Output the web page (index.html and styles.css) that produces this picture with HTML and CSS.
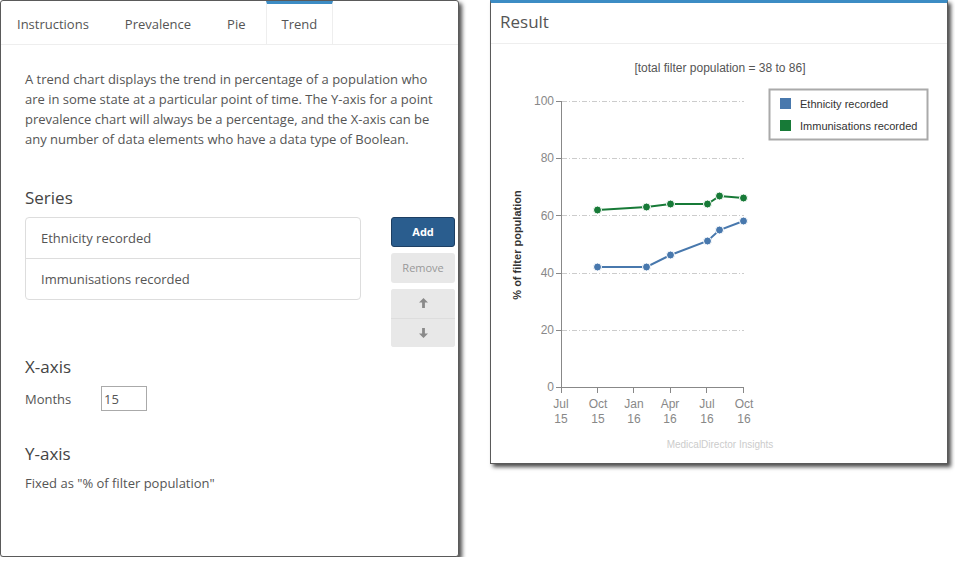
FILE: index.html
```html
<!DOCTYPE html>
<html lang="en">
<head>
    <meta charset="UTF-8">
    <meta name="viewport" content="width=device-width, initial-scale=1.0">
    <title>Trend | Chart Designer</title>
    <link rel="stylesheet" href="styles.css">
</head>
<body>

<div class="workspace">

    <!-- Chart settings -->
    <div class="panel editor">
        <ul class="tabs">
            <li>Instructions</li>
            <li>Prevalence</li>
            <li>Pie</li>
            <li class="active">Trend</li>
        </ul>

        <div class="tab-body">
            <p class="intro">A trend chart displays the trend in percentage of a population who are in some state at a particular point of time. The Y-axis for a point prevalence chart will always be a percentage, and the X-axis can be any number of data elements who have a data type of Boolean.</p>

            <h3 class="series-title">Series</h3>
            <div class="series-row">
                <ul class="series-list">
                    <li>Ethnicity recorded</li>
                    <li>Immunisations recorded</li>
                </ul>
                <div class="series-buttons">
                    <button class="btn btn-primary">Add</button>
                    <button class="btn" disabled>Remove</button>
                    <div class="btn-group">
                        <button class="btn">
                            <svg width="9" height="10" viewBox="0 0 9 10"><path d="M4.5 0 L9 4.6 L5.9 4.6 L5.9 10 L3.1 10 L3.1 4.6 L0 4.6 Z" fill="#8a8a8a"/></svg>
                        </button>
                        <button class="btn">
                            <svg width="9" height="10" viewBox="0 0 9 10"><path d="M4.5 10 L9 5.4 L5.9 5.4 L5.9 0 L3.1 0 L3.1 5.4 L0 5.4 Z" fill="#8a8a8a"/></svg>
                        </button>
                    </div>
                </div>
            </div>

            <h3 class="axis-title">X-axis</h3>
            <div class="field">
                <label for="months">Months</label>
                <input type="text" id="months" value="15">
            </div>

            <h3 class="axis-title y-title">Y-axis</h3>
            <p class="note">Fixed as "% of filter population"</p>
        </div>
    </div>

    <!-- Chart preview -->
    <div class="panel result">
        <div class="panel-heading">Result</div>
        <svg class="chart" width="456" height="419" viewBox="491 44 456 419">
            <text class="chart-title" x="720" y="72">[total filter population = 38 to 86]</text>

            <!-- grid -->
            <g class="grid">
                <line x1="562" y1="101.5" x2="744" y2="101.5"/>
                <line x1="562" y1="158.5" x2="744" y2="158.5"/>
                <line x1="562" y1="215.5" x2="744" y2="215.5"/>
                <line x1="562" y1="273.5" x2="744" y2="273.5"/>
                <line x1="562" y1="330.5" x2="744" y2="330.5"/>
            </g>

            <!-- axes -->
            <g class="axis">
                <line x1="561.5" y1="101" x2="561.5" y2="387.5"/>
                <line x1="561" y1="387.5" x2="744" y2="387.5"/>
                <line x1="556" y1="101.5" x2="561" y2="101.5"/>
                <line x1="556" y1="158.5" x2="561" y2="158.5"/>
                <line x1="556" y1="215.5" x2="561" y2="215.5"/>
                <line x1="556" y1="273.5" x2="561" y2="273.5"/>
                <line x1="556" y1="330.5" x2="561" y2="330.5"/>
                <line x1="556" y1="387.5" x2="561" y2="387.5"/>
                <line x1="561.5" y1="387" x2="561.5" y2="393"/>
                <line x1="597.5" y1="387" x2="597.5" y2="393"/>
                <line x1="633.5" y1="387" x2="633.5" y2="393"/>
                <line x1="670.5" y1="387" x2="670.5" y2="393"/>
                <line x1="706.5" y1="387" x2="706.5" y2="393"/>
                <line x1="743.5" y1="387" x2="743.5" y2="393"/>
            </g>

            <g class="tick-y">
                <text x="554" y="105">100</text>
                <text x="554" y="162">80</text>
                <text x="554" y="220">60</text>
                <text x="554" y="277">40</text>
                <text x="554" y="334">20</text>
                <text x="554" y="391">0</text>
            </g>

            <g class="tick-x">
                <text x="561" y="408">Jul</text><text x="561" y="423">15</text>
                <text x="598" y="408">Oct</text><text x="598" y="423">15</text>
                <text x="634" y="408">Jan</text><text x="634" y="423">16</text>
                <text x="670" y="408">Apr</text><text x="670" y="423">16</text>
                <text x="707" y="408">Jul</text><text x="707" y="423">16</text>
                <text x="744" y="408">Oct</text><text x="744" y="423">16</text>
            </g>

            <text class="axis-label" x="521" y="245" transform="rotate(-90 521 245)">% of filter population</text>

            <!-- Ethnicity recorded -->
            <polyline class="line blue" points="597.5,267 646.5,267 670.5,255 707.5,241 719.5,230 743.5,221"/>
            <g class="dots blue">
                <circle cx="597.5" cy="267" r="4"/>
                <circle cx="646.5" cy="267" r="4"/>
                <circle cx="670.5" cy="255" r="4"/>
                <circle cx="707.5" cy="241" r="4"/>
                <circle cx="719.5" cy="230" r="4"/>
                <circle cx="743.5" cy="221" r="4"/>
            </g>

            <!-- Immunisations recorded -->
            <polyline class="line green" points="597.5,210 646.5,207 670.5,204 707.5,204 719.5,196 743.5,198"/>
            <g class="dots green">
                <circle cx="597.5" cy="210" r="4"/>
                <circle cx="646.5" cy="207" r="4"/>
                <circle cx="670.5" cy="204" r="4"/>
                <circle cx="707.5" cy="204" r="4"/>
                <circle cx="719.5" cy="196" r="4"/>
                <circle cx="743.5" cy="198" r="4"/>
            </g>

            <!-- legend -->
            <rect class="legend" x="769.5" y="89.5" width="158" height="50"/>
            <rect x="780" y="98" width="11" height="11" fill="#4878ad"/>
            <text class="legend-text" x="800" y="108">Ethnicity recorded</text>
            <rect x="780" y="120" width="11" height="11" fill="#177a37"/>
            <text class="legend-text" x="800" y="130">Immunisations recorded</text>

            <text class="credit" x="720" y="448">MedicalDirector Insights</text>
        </svg>
    </div>

</div>

</body>
</html>
```

FILE: styles.css
```css
/* General Styles */
body {
    margin: 0;
    padding: 0;
    background-color: #fff;
    font-family: "Open Sans", Arial, sans-serif;
    font-size: 13px;
    color: #555;
}
.workspace {
    display: flex;
    align-items: flex-start;
    gap: 31px;
}
.panel {
    background-color: #fff;
    border: 1px solid #5a5a5a;
    border-radius: 3px;
    box-shadow: 3px 3px 4px rgba(0, 0, 0, 0.7);
    box-sizing: border-box;
}

/* Editor panel */
.editor {
    width: 459px;
    height: 557px;
}
.tabs {
    list-style: none;
    margin: 0;
    padding: 0;
    display: flex;
    gap: 4px;
    height: 43px;
    border-bottom: 1px solid #eee;
}
.tabs li {
    box-sizing: border-box;
    height: 43px;
    padding: 4px 15px 0;
    line-height: 39px;
    border-left: 1px solid transparent;
    border-right: 1px solid transparent;
}
.tabs li.active {
    border-color: #eee;
    border-top: 3px solid #3c8cc4;
    padding-top: 1px;
    background-color: #fff;
}
.tab-body {
    padding: 24px 3px 0 24px;
}
.intro {
    margin: 0;
    max-width: 415px;
    line-height: 20px;
}
h3 {
    font-size: 17px;
    font-weight: normal;
    color: #444;
    margin: 0;
    line-height: 20px;
}
.series-title {
    margin-top: 39px;
}
.series-row {
    display: flex;
    align-items: flex-start;
    gap: 30px;
    margin-top: 9px;
}
.series-list {
    list-style: none;
    margin: 0;
    padding: 0;
    width: 337px;
    border: 1px solid #ddd;
    border-radius: 4px;
    box-sizing: border-box;
}
.series-list li {
    padding: 0 15px;
    line-height: 40px;
}
.series-list li + li {
    border-top: 1px solid #ddd;
}
.series-buttons {
    display: flex;
    flex-direction: column;
    gap: 6px;
    width: 64px;
}
.btn {
    font-family: "Open Sans", Arial, sans-serif;
    font-size: 11px;
    height: 30px;
    border: none;
    border-radius: 3px;
    background-color: #e8e8e8;
    color: #999;
    padding: 0 0 1px;
}
.btn-primary {
    background-color: #2a5d8e;
    border: 1px solid #1d3f63;
    color: #fff;
    font-weight: bold;
}
.btn-group {
    display: flex;
    flex-direction: column;
    background-color: #e8e8e8;
    border-radius: 3px;
}
.btn-group .btn {
    height: 29px;
    display: flex;
    align-items: center;
    justify-content: center;
}
.btn-group .btn + .btn {
    border-top: 1px solid #ddd;
    border-radius: 0 0 3px 3px;
}
.axis-title {
    margin-top: 10px;
}
.field {
    display: flex;
    align-items: center;
    margin-top: 9px;
}
.field label {
    width: 76px;
}
.field input {
    width: 46px;
    height: 25px;
    box-sizing: border-box;
    border: 1px solid #aaa;
    font-family: "Open Sans", Arial, sans-serif;
    font-size: 13px;
    color: #555;
    padding: 0 2px;
}
.y-title {
    margin-top: 33px;
}
.note {
    margin: 9px 0 0;
    line-height: 20px;
}

/* Result panel */
.result {
    width: 458px;
    height: 464px;
    border-top: 3px solid #3c8cc4;
    border-radius: 0;
}
.panel-heading {
    height: 40px;
    line-height: 38px;
    padding-left: 9px;
    font-size: 17px;
    color: #555;
    border-bottom: 1px solid #eee;
}
.chart {
    display: block;
    font-family: "Liberation Sans", Arial, sans-serif;
}
.chart-title {
    font-size: 12px;
    fill: #555;
    text-anchor: middle;
}
.grid line {
    stroke: #ccc;
    stroke-dasharray: 5 2 1 2;
}
.axis line {
    stroke: #888;
    stroke-width: 1;
}
.tick-y text {
    font-size: 12px;
    fill: #888;
    text-anchor: end;
}
.tick-x text {
    font-size: 12px;
    fill: #888;
    text-anchor: middle;
}
.axis-label {
    font-size: 11px;
    font-weight: bold;
    fill: #333;
    text-anchor: middle;
}
.line {
    fill: none;
    stroke-width: 2;
}
.line.blue {
    stroke: #4878ad;
}
.line.green {
    stroke: #177a37;
}
.dots circle {
    stroke: #fff;
    stroke-width: 1;
}
.dots.blue circle {
    fill: #4878ad;
}
.dots.green circle {
    fill: #177a37;
}
.legend {
    fill: #fff;
    stroke: #aaa;
    stroke-width: 2;
}
.legend-text {
    font-size: 11px;
    fill: #333;
}
.credit {
    font-size: 10px;
    fill: #ccc;
    text-anchor: middle;
}
```
